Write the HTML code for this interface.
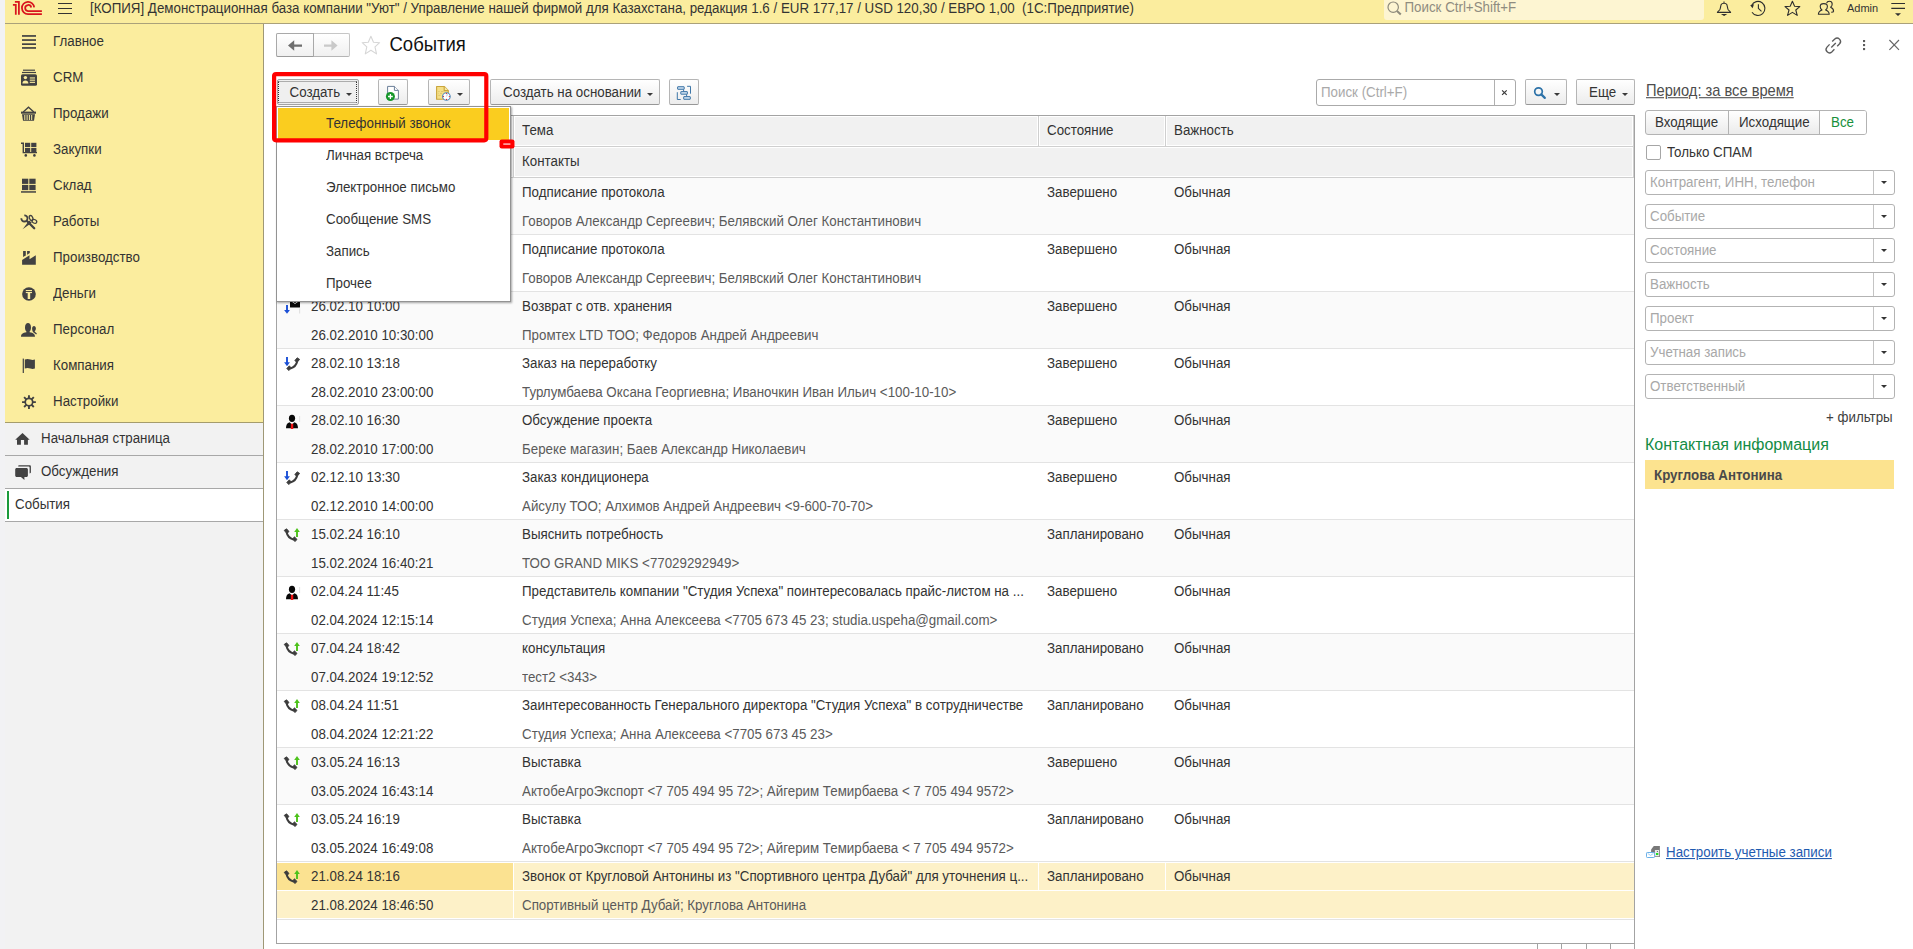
<!DOCTYPE html>
<html><head><meta charset="utf-8">
<style>
*{box-sizing:border-box;margin:0;padding:0}
html,body{width:1913px;height:949px;overflow:hidden;background:#fff;font-family:"Liberation Sans",sans-serif;font-size:13.33px;color:#333}
.a{position:absolute}
.t{position:absolute;white-space:nowrap;line-height:16px;height:16px;transform:scaleY(1.07);transform-origin:0 12.6px}
#strip{left:0;top:0;width:5px;height:949px;background:#f2f2f4}
#hdr{left:5px;top:0;width:1908px;height:24px;background:#fbed9e;border-bottom:1px solid #aaa17a}
#side{left:5px;top:24px;width:259px;height:925px;background:#f2f2f2;border-right:1px solid #9f9876}
#sec{left:0;top:0;width:258px;height:399px;background:#fbed9e;border-bottom:1px solid #a59c6c}
.oi{position:absolute;left:0;width:258px;height:33px;border-bottom:1px solid #a8a8a8}
.btn{position:absolute;height:26px;border:1px solid #b5b5b5;border-bottom-color:#979797;border-radius:2px;background:linear-gradient(#ffffff,#ececec);line-height:24px;white-space:nowrap;color:#333}
.dd{position:absolute;width:0;height:0;border-left:3px solid transparent;border-right:3px solid transparent;border-top:3px solid #3a3a3a}
#tbl{left:276px;top:115px;width:1359px;height:829px;border:1px solid #a3a3a3;background:#fff;overflow:hidden}
.row{position:absolute;left:0;width:1357px;height:57px;border-bottom:1px solid #e3e3e3}
.g{background:#f9f9f9}
.l2{color:#5a5a5a}
.inp{position:absolute;left:1645px;width:250px;height:25px;border:1px solid #b3b3b3;border-radius:3px;background:#fff}
.inp span{position:absolute;left:4px;top:4px;color:#a8a8a8;line-height:16px;white-space:nowrap;transform:scaleY(1.07);transform-origin:0 12.6px}
.inp i{position:absolute;right:20px;top:0;width:1px;height:23px;background:#c4c4c4}
.inp b{position:absolute;right:7px;top:10px;width:0;height:0;border-left:3px solid transparent;border-right:3px solid transparent;border-top:3px solid #333}
</style></head><body>
<div id="strip" class="a"></div>
<div id="hdr" class="a"></div>
<svg class="a" style="left:0;top:0" width="1913" height="24">
 <g fill="none" stroke="#d9141e" stroke-width="1.75">
  <path d="M12.9 4.9H15.8V14.8"/>
  <path d="M14.9 1.9H18.9V14.8"/>
  <path d="M34.2 7.4A6.15 6.15 0 1 0 28 14.1H41.9"/>
  <path d="M31.2 7.5A3.05 3.05 0 1 0 28 11.1H41.9"/>
 </g>
 <g stroke="#333" stroke-width="1.2">
  <path d="M58 3.5H72M58 8.5H72M58 13.5H72"/>
 </g>
 <rect x="1384" y="-3" width="320" height="23" rx="3" fill="#fdf5d2"/>
 <g fill="none" stroke="#8d8a7c" stroke-width="1.2">
  <circle cx="1393.2" cy="7.2" r="5.2"/>
  <path d="M1397 11L1400.8 14.6" stroke-width="2"/>
 </g>
 <g fill="none" stroke="#2f2f2f" stroke-width="1.1" stroke-linejoin="round">
  <path d="M1724 1.4V3.2M1721.2 4.5C1722 2.8 1726 2.8 1726.8 4.5C1727.6 6.5 1727.4 8.6 1728.4 10C1729.4 11.2 1730.6 11.6 1730.6 12.4H1717.4C1717.4 11.6 1718.6 11.2 1719.6 10C1720.6 8.6 1720.4 6.5 1721.2 4.5Z"/>
  <path d="M1751.6 5.4A7 7 0 1 1 1752 12.2"/>
  <path d="M1758.4 4.2V8.4L1761.5 11.4"/>
  <path d="M1792.4 1.2L1794.6 6.2L1799.8 6.6L1795.8 10L1797.2 15.4L1792.4 12.4L1787.6 15.4L1789 10L1785 6.6L1790.2 6.2Z"/>
  <path d="M1818.4 14.3C1818.4 11.6 1820.4 10.6 1822 10C1820.5 9 1820.2 7.6 1820.2 6.5C1820.2 4.6 1821.6 3.6 1823.8 3.6C1826 3.6 1827.4 4.6 1827.4 6.5C1827.4 7.6 1827.1 9 1825.6 10C1827.2 10.6 1829.2 11.6 1829.2 14.3Z"/>
  <path d="M1826.6 3.2C1827 1.9 1828 1.2 1829.2 1.2C1831 1.2 1832.2 2.3 1832.2 4C1832.2 5.2 1831.9 6.4 1830.6 7.3C1832 7.9 1833.6 9 1833.6 11.3C1833.6 11.9 1832.6 12.3 1831.2 12.3"/>
 </g>
 <path d="M1720.9 14.1H1727.3L1724.1 16.1Z" fill="#2f2f2f"/>
 <path d="M1750.2 5.3L1754 4.3L1752.6 8.2Z" fill="#2f2f2f"/>
 <g stroke="#2f2f2f" stroke-width="1.2"><path d="M1891.3 3.5H1905M1891.3 8.4H1905"/></g>
 <path d="M1895 13.2H1901L1898 15.9Z" fill="#2f2f2f"/>
</svg>
<div class="t" style="left:90px;top:1px;color:#333">[КОПИЯ] Демонстрационная база компании "Уют" / Управление нашей фирмой для Казахстана, редакция 1.6 / EUR 177,17 / USD 120,30 / ЕВРО 1,00&nbsp;&nbsp;(1С:Предприятие)</div>
<div class="t" style="left:1404.5px;top:0px;color:#8f8c80">Поиск Ctrl+Shift+F</div>
<div class="t" style="left:1847px;top:0px;font-size:11px;color:#333">Admin</div>
<div id="side" class="a"><div id="sec" class="a"></div>
 <div class="oi" style="top:399px"></div>
 <div class="oi" style="top:432px"></div>
 <div class="oi" style="top:465px;background:#fff"></div>
 <div class="a" style="left:2px;top:467px;width:2px;height:28px;background:#1a9a3a"></div>
</div>
<svg class="a" style="left:0;top:24px" width="264" height="500" viewBox="0 24 264 500">
 <g fill="#424242">
  <rect x="22" y="35.1" width="14" height="1.7"/><rect x="22" y="39.2" width="14" height="1.7"/><rect x="22" y="43.3" width="14" height="1.7"/><rect x="22" y="47.1" width="14" height="1.7"/>
  <!-- CRM -->
  <rect x="23" y="69.6" width="12" height="1.2"/><rect x="22" y="71.9" width="14" height="1.2"/>
  <rect x="21" y="74.2" width="16" height="11.6" rx="1.6"/>
  <!-- basket -->
  <path d="M23.2 112L28.5 107.2L33.8 112" fill="none" stroke="#424242" stroke-width="1.3"/>
  <rect x="21" y="111.6" width="15" height="2.1"/>
  <path d="M22 114.2H35L34 120.8H23Z"/>
  <!-- cart -->
  <path d="M21 143.2H23.3V152.6H37" fill="none" stroke="#424242" stroke-width="1.4"/>
  <rect x="25" y="142.8" width="5.2" height="4.3"/><rect x="31.2" y="142.8" width="5.2" height="4.3"/>
  <rect x="25" y="148" width="5.2" height="4"/><rect x="31.2" y="148" width="5.2" height="4"/>
  <circle cx="25.8" cy="155.4" r="1.3"/><circle cx="34.4" cy="155.4" r="1.3"/>
  <!-- sklad -->
  <rect x="22" y="178.7" width="6.3" height="5.2"/><rect x="29.3" y="178.7" width="6.3" height="5.2"/>
  <rect x="22" y="184.9" width="6.3" height="5.2"/><rect x="29.3" y="184.9" width="6.3" height="5.2"/>
  <rect x="21" y="191.2" width="15" height="1.5"/>
  <!-- tools -->
  <path d="M24.3 215.3A3.1 3.1 0 1 1 21.3 218.3" fill="none" stroke="#424242" stroke-width="1.8"/>
  <path d="M27.2 221.2L34.2 228.2" stroke="#424242" stroke-width="2.3" stroke-linecap="round"/>
  <ellipse cx="31.1" cy="218" rx="1.6" ry="2.6" transform="rotate(-25 31.1 218)" fill="none" stroke="#424242" stroke-width="1.3"/>
  <ellipse cx="34.4" cy="221.4" rx="2.4" ry="1.8" transform="rotate(25 34.4 221.4)" fill="none" stroke="#424242" stroke-width="1.3"/>
  <path d="M29.2 220.6L31.8 222.8L22.6 229.2Z"/>
  <!-- factory -->
  <path d="M22.1 264.7V260L29.5 255.2V259.2L35.8 255.2V264.7Z"/>
  <path d="M23.1 251H25.8V255.4L23.1 257.1Z"/>
  <path d="M27.1 251H29.8V253.1L27.1 254.8Z"/>
  <!-- money -->
  <circle cx="28.96" cy="294" r="6.85"/>
  <!-- staff -->
  <path d="M21 336.7C21 334 22.6 332.8 26.4 332.3V331.4C25.4 330.6 25 329 25 327.4C25 324.6 26.2 323 28 323C29.8 323 31 324.6 31 327.4C31 329 30.6 330.6 29.6 331.4V332.3C33.4 332.8 35 334 35 336.7Z"/>
  <path d="M32.1 328.6C32.1 327 32.9 326 34 326C35.1 326 35.9 327 35.9 328.6C35.9 329.8 35.4 330.8 34.6 331.4L36.9 333.4L36.2 334.6L33.2 332.2C32.5 331.5 32.1 330 32.1 328.6Z"/>
  <!-- flag -->
  <rect x="22.7" y="358.6" width="1.2" height="14.4"/>
  <path d="M24.8 359.6C26.8 358.6 28.6 358.8 30.4 359.6C31.9 360.2 33.3 360.2 34.9 359.6V368.6C33.3 369.2 31.9 369.2 30.4 368.6C28.6 367.8 26.8 367.6 24.8 368.6Z"/>
  <!-- gear -->
  <circle cx="28.96" cy="402.1" r="3.75" fill="none" stroke="#424242" stroke-width="1.7"/>
  <path d="M28.96 395.2V398.6M28.96 405.6V409M22.06 402.1H25.5M32.4 402.1H35.86M24.1 397.2L26.5 399.6M31.4 404.6L33.8 407M33.8 397.2L31.4 399.6M26.5 404.6L24.1 407" stroke="#424242" stroke-width="1.9"/>
  <!-- home -->
  <path d="M15.2 439.8L22.5 433L29.7 439.8H27.9V444.8H24.1V440.1H20.9V444.8H17V439.8Z"/>
  <!-- discussions -->
  <path d="M19.2 465.2H29.6C30.4 465.2 30.9 465.7 30.9 466.5V472.2C30.9 472.9 30.4 473.4 29.6 473.4V467.4C29.6 466.9 29.2 466.5 28.6 466.5H18.2C18.2 465.7 18.5 465.2 19.2 465.2Z"/>
  <path d="M16.8 468.1H26.4C27.3 468.1 27.9 468.7 27.9 469.6V475.5C27.9 476.4 27.3 477 26.4 477H24.4V479.9L20.9 477H16.8C15.8 477 15.2 476.4 15.2 475.5V469.6C15.2 468.7 15.8 468.1 16.8 468.1Z"/>
 </g>
 <g fill="#fbed9e">
  <circle cx="25.4" cy="77.6" r="1.7"/><path d="M22.4 83.6C22.4 81.4 23.6 80.4 25.4 80.4C27.2 80.4 28.4 81.4 28.4 83.6Z"/>
  <rect x="29.8" y="77.4" width="5.2" height="1.1"/><rect x="29.8" y="79.6" width="5.2" height="1.1"/><rect x="29.8" y="81.8" width="5.2" height="1.1"/>
  <rect x="24.3" y="115" width="1" height="5"/><rect x="26.6" y="115" width="1" height="5"/><rect x="28.9" y="115" width="1" height="5"/><rect x="31.2" y="115" width="1" height="5"/>
  <rect x="25.8" y="290" width="6.2" height="1.1"/><rect x="25.8" y="292" width="6.2" height="1.1"/><rect x="27.7" y="293" width="2.5" height="6"/>
 </g>
</svg>
<div class="t" style="left:53px;top:34px">Главное</div>
<div class="t" style="left:53px;top:70px">CRM</div>
<div class="t" style="left:53px;top:106px">Продажи</div>
<div class="t" style="left:53px;top:142px">Закупки</div>
<div class="t" style="left:53px;top:178px">Склад</div>
<div class="t" style="left:53px;top:214px">Работы</div>
<div class="t" style="left:53px;top:250px">Производство</div>
<div class="t" style="left:53px;top:286px">Деньги</div>
<div class="t" style="left:53px;top:322px">Персонал</div>
<div class="t" style="left:53px;top:358px">Компания</div>
<div class="t" style="left:53px;top:394px">Настройки</div>
<div class="t" style="left:41px;top:431px">Начальная страница</div>
<div class="t" style="left:41px;top:464px">Обсуждения</div>
<div class="t" style="left:15px;top:497px">События</div>
<!-- title row -->
<div class="a" style="left:276px;top:33px;width:74px;height:24px;border:1px solid #c6c6c6;border-bottom-color:#b5b5b5;border-radius:2px;background:linear-gradient(#fff,#f0f0f0)"></div>
<div class="a" style="left:276px;top:33px;width:38px;height:24px;border:1px solid #a9a9a9;border-bottom-color:#9a9a9a;border-radius:2px 0 0 2px;background:linear-gradient(#fff,#f0f0f0)"></div>
<svg class="a" style="left:264px;top:24px" width="1649" height="91" viewBox="264 24 1649 91">
 <path d="M288 45.5L294.2 40.2V44.4H302V46.8H294.2V50.8Z" fill="#6e6e6e"/>
 <path d="M337.6 45.5L331.4 40.2V44.4H324V46.8H331.4V50.8Z" fill="#c9c9c9"/>
 <path d="M370.9 36.3L373.5 42.2L379.6 42.7L375 46.8L376.5 53.9L370.9 50.3L365.3 53.9L366.8 46.8L362.2 42.7L368.3 42.2Z" fill="none" stroke="#d6d6d6" stroke-width="1.1" stroke-linejoin="round"/>
 <!-- link icon -->
 <g fill="none" stroke="#5c5c5c" stroke-width="1.35">
  <path d="M1832.2 41.6L1834.8 39A3.4 3.4 0 0 1 1839.6 43.8L1837.2 46.3"/>
  <path d="M1834.4 49.3L1831.8 51.9A3.4 3.4 0 0 1 1827 47.1L1829.6 44.4"/>
  <path d="M1831.3 47.6L1835.8 43.1"/>
 </g>
 <g fill="#5c5c5c"><rect x="1863" y="40" width="2.1" height="2.1"/><rect x="1863" y="44" width="2.1" height="2.1"/><rect x="1863" y="48" width="2.1" height="2.1"/></g>
 <path d="M1889.4 40L1899 49.8M1899 40L1889.4 49.8" stroke="#666" stroke-width="1.15"/>
</svg>
<div class="t" style="left:389.5px;top:34px;font-size:18.5px;line-height:22px;height:22px;color:#111">События</div>

<!-- toolbar -->
<div class="a" style="left:277px;top:79px;width:82px;height:26px;border:1px solid #a3a3a3;border-radius:2px;background:#efefef"></div>
<div class="a" style="left:278px;top:81px;width:79px;height:22px;border-top:1px solid #acacac;border-bottom:1px solid #acacac;border-left:1px dotted #333;border-right:1px dotted #333"></div>
<div class="t" style="left:289.5px;top:85px">Создать</div>
<div class="dd" style="left:346px;top:93px"></div>
<div class="btn" style="left:378px;top:79px;width:30px"></div>
<div class="btn" style="left:428px;top:79px;width:42px"></div>
<div class="dd" style="left:457px;top:93px"></div>
<div class="btn" style="left:490px;top:79px;width:170px"></div>
<div class="t" style="left:503px;top:85px">Создать на основании</div>
<div class="dd" style="left:647px;top:93px"></div>
<div class="btn" style="left:669px;top:79px;width:30px"></div>
<svg class="a" style="left:370px;top:79px" width="340" height="26" viewBox="370 79 340 26">
 <!-- new doc icon -->
 <path d="M387.6 86.4H394.4L398.4 90.4V99.1H387.6Z" fill="#fff" stroke="#6b7f99" stroke-width="1"/>
 <path d="M394.4 86.4V90.4H398.4" fill="#fff" stroke="#6b7f99" stroke-width="1"/>
 <circle cx="390.4" cy="96.5" r="4.5" fill="#16962a"/>
 <path d="M388 96.5H392.8M390.4 94.1V98.9" stroke="#fff" stroke-width="1.3"/>
 <!-- doc with clock -->
 <path d="M436.6 86.5H444.2L448.3 90.6V99.2H436.6Z" fill="#f5df86" stroke="#c9a53c" stroke-width="1.1" stroke-linejoin="round"/>
 <path d="M444.2 86.5V90.6H448.3" fill="#f8e9a8" stroke="#c9a53c" stroke-width="1.1"/>
 <path d="M438.2 91.5H439.6M441 91.5H443.4M438.2 93.4H438.8M440 93.4H442M438.2 95.4H440.6" stroke="#d8bf6a" stroke-width="0.8"/>
 <circle cx="446.4" cy="96.5" r="3.8" fill="#fff" stroke="#4f86b8" stroke-width="1.1"/>
 <g fill="#e01010"><circle cx="446.4" cy="93.6" r="0.55"/><circle cx="446.4" cy="99.4" r="0.55"/><circle cx="443.5" cy="96.5" r="0.55"/><circle cx="449.3" cy="96.5" r="0.55"/></g>
 <path d="M446.4 96.5L447.6 94.4" stroke="#8fb0d8" stroke-width="0.7"/>
 <!-- structure icon -->
 <g fill="#c9dcee" stroke="#3f77a8" stroke-width="1">
  <rect x="677.6" y="86.7" width="6.6" height="2.6" rx="0.3"/>
  <rect x="680.8" y="91.6" width="6.6" height="2.6" rx="0.3"/>
  <rect x="683.7" y="96.6" width="6.6" height="2.7" rx="0.3"/>
 </g>
 <path d="M683.6 89.4V91.6M686.6 94.2V96.6M687.1 86.3H690.5V93.7M677.3 92.2V99.5H680.7" fill="none" stroke="#3f77a8" stroke-width="1"/>
</svg>

<!-- search -->
<div class="a" style="left:1316px;top:79px;width:200px;height:27px;border:1px solid #aaaaaa;border-radius:3px;background:#fff"></div>
<div class="a" style="left:1494px;top:80px;width:1px;height:25px;background:#b0b0b0"></div>
<div class="t" style="left:1321px;top:85px;color:#a9a9a9">Поиск (Ctrl+F)</div>
<svg class="a" style="left:1496px;top:80px" width="20" height="24"><path d="M6.1 10.3L10.7 14.9M10.7 10.3L6.1 14.9" stroke="#3a3a3a" stroke-width="1.2"/></svg>
<div class="btn" style="left:1525px;top:79px;width:42px"></div>
<svg class="a" style="left:1525px;top:79px" width="42" height="26">
 <circle cx="13.5" cy="12.6" r="3.8" fill="none" stroke="#2d72a8" stroke-width="1.7"/>
 <path d="M16.3 15.4L19.8 18.9" stroke="#2d72a8" stroke-width="2.2" stroke-linecap="round"/>
</svg>
<div class="dd" style="left:1554px;top:93px"></div>
<div class="btn" style="left:1576px;top:79px;width:59px"></div>
<div class="t" style="left:1589px;top:85px">Еще</div>
<div class="dd" style="left:1622px;top:93px"></div>
<div id="tbl" class="a">
<div class="a" style="left:0;top:0;width:1357px;height:62px;background:#cfcfcf"></div>
<div class="a" style="left:0px;top:0;width:236px;height:30px;background:#f1f1f1;border:1px solid #fff"></div>
<div class="a" style="left:237px;top:0;width:524px;height:30px;background:#f1f1f1;border:1px solid #fff"></div>
<div class="a" style="left:762px;top:0;width:126px;height:30px;background:#f1f1f1;border:1px solid #fff"></div>
<div class="a" style="left:889px;top:0;width:467px;height:30px;background:#f1f1f1;border:1px solid #fff"></div>
<div class="a" style="left:0px;top:31px;width:236px;height:30px;background:#f1f1f1;border:1px solid #fff"></div>
<div class="a" style="left:237px;top:31px;width:1119px;height:30px;background:#f1f1f1;border:1px solid #fff"></div>
<div class="t" style="left:34px;top:7px">Дата</div>
<div class="t" style="left:34px;top:38px">Окончание</div>
<div class="t" style="left:245px;top:7px">Тема</div>
<div class="t" style="left:245px;top:38px">Контакты</div>
<div class="t" style="left:770px;top:7px">Состояние</div>
<div class="t" style="left:897px;top:7px">Важность</div>
<div class="row" style="top:62px;height:57px;background:#fafafa">
<svg class="a" style="left:0;top:0" width="30" height="30"><g transform="translate(29.8,0) scale(-1,1)"><path d="M9.6 12.2Q10.6 17.6 16.6 19.6" fill="none" stroke="#3c3c3c" stroke-width="2"/><path d="M7.2 10.4L9.6 8.8L12 11.6L9.8 13.4Z" fill="#3c3c3c" stroke="#3c3c3c" stroke-width="0.9" stroke-linejoin="round"/><path d="M15.6 19.2L17.4 16.8L20 19.4L18 21.6Z" fill="#3c3c3c" stroke="#3c3c3c" stroke-width="0.9" stroke-linejoin="round"/></g><path d="M10 8V14" stroke="#1a4fd6" stroke-width="1.9"/><path d="M7.1 13.2L10 17.2L12.9 13.2Z" fill="#1a4fd6"/></svg>
<div class="t" style="left:34px;top:7px">25.02.10 10:00</div>
<div class="t" style="left:34px;top:36px">25.02.2010 10:30:00</div>
<div class="t" style="left:245px;top:7px">Подписание протокола</div>
<div class="t l2" style="left:245px;top:36px">Говоров Александр Сергеевич; Белявский Олег Константинович</div>
<div class="t" style="left:770px;top:7px">Завершено</div>
<div class="t" style="left:897px;top:7px">Обычная</div>
</div>
<div class="row" style="top:119px;height:57px;background:#fff">
<svg class="a" style="left:0;top:0" width="30" height="30"><g transform="translate(29.8,0) scale(-1,1)"><path d="M9.6 12.2Q10.6 17.6 16.6 19.6" fill="none" stroke="#3c3c3c" stroke-width="2"/><path d="M7.2 10.4L9.6 8.8L12 11.6L9.8 13.4Z" fill="#3c3c3c" stroke="#3c3c3c" stroke-width="0.9" stroke-linejoin="round"/><path d="M15.6 19.2L17.4 16.8L20 19.4L18 21.6Z" fill="#3c3c3c" stroke="#3c3c3c" stroke-width="0.9" stroke-linejoin="round"/></g><path d="M10 8V14" stroke="#1a4fd6" stroke-width="1.9"/><path d="M7.1 13.2L10 17.2L12.9 13.2Z" fill="#1a4fd6"/></svg>
<div class="t" style="left:34px;top:7px">25.02.10 11:00</div>
<div class="t" style="left:34px;top:36px">25.02.2010 11:30:00</div>
<div class="t" style="left:245px;top:7px">Подписание протокола</div>
<div class="t l2" style="left:245px;top:36px">Говоров Александр Сергеевич; Белявский Олег Константинович</div>
<div class="t" style="left:770px;top:7px">Завершено</div>
<div class="t" style="left:897px;top:7px">Обычная</div>
</div>
<div class="row" style="top:176px;height:57px;background:#fafafa">
<svg class="a" style="left:0;top:0" width="30" height="30"><path d="M10 12.9V19" stroke="#1a4fd6" stroke-width="1.9"/><path d="M7.1 18L10 21.8L12.9 18Z" fill="#1a4fd6"/><rect x="13" y="8" width="10" height="7.6" rx="0.6" fill="#0a0a0a"/><path d="M13.6 8.4L18 11.6L22.4 8.4" stroke="#cfcfcf" stroke-width="1" fill="none"/><rect x="22.3" y="16.5" width="0.8" height="5" fill="#d8d8d8"/></svg>
<div class="t" style="left:34px;top:7px">26.02.10 10:00</div>
<div class="t" style="left:34px;top:36px">26.02.2010 10:30:00</div>
<div class="t" style="left:245px;top:7px">Возврат с отв. хранения</div>
<div class="t l2" style="left:245px;top:36px">Промтех LTD ТОО; Федоров Андрей Андреевич</div>
<div class="t" style="left:770px;top:7px">Завершено</div>
<div class="t" style="left:897px;top:7px">Обычная</div>
</div>
<div class="row" style="top:233px;height:57px;background:#fff">
<svg class="a" style="left:0;top:0" width="30" height="30"><g transform="translate(29.8,0) scale(-1,1)"><path d="M9.6 12.2Q10.6 17.6 16.6 19.6" fill="none" stroke="#3c3c3c" stroke-width="2"/><path d="M7.2 10.4L9.6 8.8L12 11.6L9.8 13.4Z" fill="#3c3c3c" stroke="#3c3c3c" stroke-width="0.9" stroke-linejoin="round"/><path d="M15.6 19.2L17.4 16.8L20 19.4L18 21.6Z" fill="#3c3c3c" stroke="#3c3c3c" stroke-width="0.9" stroke-linejoin="round"/></g><path d="M10 8V14" stroke="#1a4fd6" stroke-width="1.9"/><path d="M7.1 13.2L10 17.2L12.9 13.2Z" fill="#1a4fd6"/></svg>
<div class="t" style="left:34px;top:7px">28.02.10 13:18</div>
<div class="t" style="left:34px;top:36px">28.02.2010 23:00:00</div>
<div class="t" style="left:245px;top:7px">Заказ на переработку</div>
<div class="t l2" style="left:245px;top:36px">Турлумбаева Оксана Георгиевна; Иваночкин Иван Ильич &lt;100-10-10&gt;</div>
<div class="t" style="left:770px;top:7px">Завершено</div>
<div class="t" style="left:897px;top:7px">Обычная</div>
</div>
<div class="row" style="top:290px;height:57px;background:#fafafa">
<svg class="a" style="left:0;top:0" width="30" height="30"><ellipse cx="15" cy="12.3" rx="3.1" ry="3.6" fill="#080808"/><path d="M9 22.2C9 18.6 10.4 16.8 12.6 16.2L15 18.6L17.4 16.2C19.6 16.8 21 18.6 21 22.2Z" fill="#080808"/><path d="M13.9 17.8H16.2L16.3 23H13.8Z" fill="#f01010"/><rect x="22.3" y="10" width="0.8" height="6" fill="#dcdcdc"/></svg>
<div class="t" style="left:34px;top:7px">28.02.10 16:30</div>
<div class="t" style="left:34px;top:36px">28.02.2010 17:00:00</div>
<div class="t" style="left:245px;top:7px">Обсуждение проекта</div>
<div class="t l2" style="left:245px;top:36px">Береке магазин; Баев Александр Николаевич</div>
<div class="t" style="left:770px;top:7px">Завершено</div>
<div class="t" style="left:897px;top:7px">Обычная</div>
</div>
<div class="row" style="top:347px;height:57px;background:#fff">
<svg class="a" style="left:0;top:0" width="30" height="30"><g transform="translate(29.8,0) scale(-1,1)"><path d="M9.6 12.2Q10.6 17.6 16.6 19.6" fill="none" stroke="#3c3c3c" stroke-width="2"/><path d="M7.2 10.4L9.6 8.8L12 11.6L9.8 13.4Z" fill="#3c3c3c" stroke="#3c3c3c" stroke-width="0.9" stroke-linejoin="round"/><path d="M15.6 19.2L17.4 16.8L20 19.4L18 21.6Z" fill="#3c3c3c" stroke="#3c3c3c" stroke-width="0.9" stroke-linejoin="round"/></g><path d="M10 8V14" stroke="#1a4fd6" stroke-width="1.9"/><path d="M7.1 13.2L10 17.2L12.9 13.2Z" fill="#1a4fd6"/></svg>
<div class="t" style="left:34px;top:7px">02.12.10 13:30</div>
<div class="t" style="left:34px;top:36px">02.12.2010 14:00:00</div>
<div class="t" style="left:245px;top:7px">Заказ кондиционера</div>
<div class="t l2" style="left:245px;top:36px">Айсулу ТОО; Алхимов Андрей Андреевич &lt;9-600-70-70&gt;</div>
<div class="t" style="left:770px;top:7px">Завершено</div>
<div class="t" style="left:897px;top:7px">Обычная</div>
</div>
<div class="row" style="top:404px;height:57px;background:#fafafa">
<svg class="a" style="left:0;top:0" width="30" height="30"><path d="M9.6 12.2Q10.6 17.6 16.6 19.6" fill="none" stroke="#3c3c3c" stroke-width="2"/><path d="M7.2 10.4L9.6 8.8L12 11.6L9.8 13.4Z" fill="#3c3c3c" stroke="#3c3c3c" stroke-width="0.9" stroke-linejoin="round"/><path d="M15.6 19.2L17.4 16.8L20 19.4L18 21.6Z" fill="#3c3c3c" stroke="#3c3c3c" stroke-width="0.9" stroke-linejoin="round"/><path d="M20 17V10.6" stroke="#4cc21a" stroke-width="1.9"/><path d="M17.2 11.9L20 8.1L22.8 11.9Z" fill="#4cc21a"/></svg>
<div class="t" style="left:34px;top:7px">15.02.24 16:10</div>
<div class="t" style="left:34px;top:36px">15.02.2024 16:40:21</div>
<div class="t" style="left:245px;top:7px">Выяснить потребность</div>
<div class="t l2" style="left:245px;top:36px">ТОО GRAND MIKS &lt;77029292949&gt;</div>
<div class="t" style="left:770px;top:7px">Запланировано</div>
<div class="t" style="left:897px;top:7px">Обычная</div>
</div>
<div class="row" style="top:461px;height:57px;background:#fff">
<svg class="a" style="left:0;top:0" width="30" height="30"><ellipse cx="15" cy="12.3" rx="3.1" ry="3.6" fill="#080808"/><path d="M9 22.2C9 18.6 10.4 16.8 12.6 16.2L15 18.6L17.4 16.2C19.6 16.8 21 18.6 21 22.2Z" fill="#080808"/><path d="M13.9 17.8H16.2L16.3 23H13.8Z" fill="#f01010"/><rect x="22.3" y="10" width="0.8" height="6" fill="#dcdcdc"/></svg>
<div class="t" style="left:34px;top:7px">02.04.24 11:45</div>
<div class="t" style="left:34px;top:36px">02.04.2024 12:15:14</div>
<div class="t" style="left:245px;top:7px">Представитель компании "Студия Успеха" поинтересовалась прайс-листом на ...</div>
<div class="t l2" style="left:245px;top:36px">Студия Успеха; Анна Алексеева &lt;7705 673 45 23; studia.uspeha@gmail.com&gt;</div>
<div class="t" style="left:770px;top:7px">Завершено</div>
<div class="t" style="left:897px;top:7px">Обычная</div>
</div>
<div class="row" style="top:518px;height:57px;background:#fafafa">
<svg class="a" style="left:0;top:0" width="30" height="30"><path d="M9.6 12.2Q10.6 17.6 16.6 19.6" fill="none" stroke="#3c3c3c" stroke-width="2"/><path d="M7.2 10.4L9.6 8.8L12 11.6L9.8 13.4Z" fill="#3c3c3c" stroke="#3c3c3c" stroke-width="0.9" stroke-linejoin="round"/><path d="M15.6 19.2L17.4 16.8L20 19.4L18 21.6Z" fill="#3c3c3c" stroke="#3c3c3c" stroke-width="0.9" stroke-linejoin="round"/><path d="M20 17V10.6" stroke="#4cc21a" stroke-width="1.9"/><path d="M17.2 11.9L20 8.1L22.8 11.9Z" fill="#4cc21a"/></svg>
<div class="t" style="left:34px;top:7px">07.04.24 18:42</div>
<div class="t" style="left:34px;top:36px">07.04.2024 19:12:52</div>
<div class="t" style="left:245px;top:7px">консультация</div>
<div class="t l2" style="left:245px;top:36px">тест2 &lt;343&gt;</div>
<div class="t" style="left:770px;top:7px">Запланировано</div>
<div class="t" style="left:897px;top:7px">Обычная</div>
</div>
<div class="row" style="top:575px;height:57px;background:#fff">
<svg class="a" style="left:0;top:0" width="30" height="30"><path d="M9.6 12.2Q10.6 17.6 16.6 19.6" fill="none" stroke="#3c3c3c" stroke-width="2"/><path d="M7.2 10.4L9.6 8.8L12 11.6L9.8 13.4Z" fill="#3c3c3c" stroke="#3c3c3c" stroke-width="0.9" stroke-linejoin="round"/><path d="M15.6 19.2L17.4 16.8L20 19.4L18 21.6Z" fill="#3c3c3c" stroke="#3c3c3c" stroke-width="0.9" stroke-linejoin="round"/><path d="M20 17V10.6" stroke="#4cc21a" stroke-width="1.9"/><path d="M17.2 11.9L20 8.1L22.8 11.9Z" fill="#4cc21a"/></svg>
<div class="t" style="left:34px;top:7px">08.04.24 11:51</div>
<div class="t" style="left:34px;top:36px">08.04.2024 12:21:22</div>
<div class="t" style="left:245px;top:7px">Заинтересованность Генерального директора "Студия Успеха" в сотрудничестве</div>
<div class="t l2" style="left:245px;top:36px">Студия Успеха; Анна Алексеева &lt;7705 673 45 23&gt;</div>
<div class="t" style="left:770px;top:7px">Запланировано</div>
<div class="t" style="left:897px;top:7px">Обычная</div>
</div>
<div class="row" style="top:632px;height:57px;background:#fafafa">
<svg class="a" style="left:0;top:0" width="30" height="30"><path d="M9.6 12.2Q10.6 17.6 16.6 19.6" fill="none" stroke="#3c3c3c" stroke-width="2"/><path d="M7.2 10.4L9.6 8.8L12 11.6L9.8 13.4Z" fill="#3c3c3c" stroke="#3c3c3c" stroke-width="0.9" stroke-linejoin="round"/><path d="M15.6 19.2L17.4 16.8L20 19.4L18 21.6Z" fill="#3c3c3c" stroke="#3c3c3c" stroke-width="0.9" stroke-linejoin="round"/><path d="M20 17V10.6" stroke="#4cc21a" stroke-width="1.9"/><path d="M17.2 11.9L20 8.1L22.8 11.9Z" fill="#4cc21a"/></svg>
<div class="t" style="left:34px;top:7px">03.05.24 16:13</div>
<div class="t" style="left:34px;top:36px">03.05.2024 16:43:14</div>
<div class="t" style="left:245px;top:7px">Выставка</div>
<div class="t l2" style="left:245px;top:36px">АктобеАгроЭкспорт &lt;7 705 494 95 72&gt;; Айгерим Темирбаева &lt; 7 705 494 9572&gt;</div>
<div class="t" style="left:770px;top:7px">Завершено</div>
<div class="t" style="left:897px;top:7px">Обычная</div>
</div>
<div class="row" style="top:689px;height:57px;background:#fff">
<svg class="a" style="left:0;top:0" width="30" height="30"><path d="M9.6 12.2Q10.6 17.6 16.6 19.6" fill="none" stroke="#3c3c3c" stroke-width="2"/><path d="M7.2 10.4L9.6 8.8L12 11.6L9.8 13.4Z" fill="#3c3c3c" stroke="#3c3c3c" stroke-width="0.9" stroke-linejoin="round"/><path d="M15.6 19.2L17.4 16.8L20 19.4L18 21.6Z" fill="#3c3c3c" stroke="#3c3c3c" stroke-width="0.9" stroke-linejoin="round"/><path d="M20 17V10.6" stroke="#4cc21a" stroke-width="1.9"/><path d="M17.2 11.9L20 8.1L22.8 11.9Z" fill="#4cc21a"/></svg>
<div class="t" style="left:34px;top:7px">03.05.24 16:19</div>
<div class="t" style="left:34px;top:36px">03.05.2024 16:49:08</div>
<div class="t" style="left:245px;top:7px">Выставка</div>
<div class="t l2" style="left:245px;top:36px">АктобеАгроЭкспорт &lt;7 705 494 95 72&gt;; Айгерим Темирбаева &lt; 7 705 494 9572&gt;</div>
<div class="t" style="left:770px;top:7px">Запланировано</div>
<div class="t" style="left:897px;top:7px">Обычная</div>
</div>
<div class="row" style="top:746px;height:58px;background:#fdf1c8">
<div class="a" style="left:0;top:0;width:236px;height:28px;background:#fbe291"></div>
<div class="a" style="left:0;top:0;width:1357px;height:1px;background:#fff"></div>
<div class="a" style="left:0;top:28px;width:1357px;height:1px;background:#fff"></div>
<div class="a" style="left:0;top:56px;width:1357px;height:1px;background:#fff"></div>
<div class="a" style="left:236px;top:0;width:1px;height:57px;background:#fff"></div>
<div class="a" style="left:761px;top:0;width:1px;height:28px;background:#fff"></div>
<div class="a" style="left:888px;top:0;width:1px;height:28px;background:#fff"></div>
<svg class="a" style="left:0;top:0" width="30" height="30"><path d="M9.6 12.2Q10.6 17.6 16.6 19.6" fill="none" stroke="#3c3c3c" stroke-width="2"/><path d="M7.2 10.4L9.6 8.8L12 11.6L9.8 13.4Z" fill="#3c3c3c" stroke="#3c3c3c" stroke-width="0.9" stroke-linejoin="round"/><path d="M15.6 19.2L17.4 16.8L20 19.4L18 21.6Z" fill="#3c3c3c" stroke="#3c3c3c" stroke-width="0.9" stroke-linejoin="round"/><path d="M20 17V10.6" stroke="#4cc21a" stroke-width="1.9"/><path d="M17.2 11.9L20 8.1L22.8 11.9Z" fill="#4cc21a"/></svg>
<div class="t" style="left:34px;top:7px">21.08.24 18:16</div>
<div class="t" style="left:34px;top:36px">21.08.2024 18:46:50</div>
<div class="t" style="left:245px;top:7px">Звонок от Кругловой Антонины из "Спортивного центра Дубай" для уточнения ц...</div>
<div class="t l2" style="left:245px;top:36px">Спортивный центр Дубай; Круглова Антонина</div>
<div class="t" style="left:770px;top:7px">Запланировано</div>
<div class="t" style="left:897px;top:7px">Обычная</div>
</div>
</div>
<div class="a" style="left:1537px;top:943px;width:1px;height:6px;background:#a3a3a3"></div>
<div class="a" style="left:1561px;top:943px;width:1px;height:6px;background:#a3a3a3"></div>
<div class="a" style="left:1586px;top:943px;width:1px;height:6px;background:#a3a3a3"></div>
<div class="a" style="left:1610px;top:943px;width:1px;height:6px;background:#a3a3a3"></div>
<div class="a" style="left:1634px;top:943px;width:1px;height:6px;background:#a3a3a3"></div><!-- popup -->
<div class="a" style="left:276px;top:106px;width:235px;height:196px;background:#fff;border:1px solid #939393;box-shadow:1px 1px 2px rgba(0,0,0,.35)"></div>
<div class="a" style="left:278px;top:108px;width:231px;height:32px;background:#facd1f"></div>
<div class="t" style="left:326px;top:116px">Телефонный звонок</div>
<div class="t" style="left:326px;top:148px">Личная встреча</div>
<div class="t" style="left:326px;top:180px">Электронное письмо</div>
<div class="t" style="left:326px;top:212px">Сообщение SMS</div>
<div class="t" style="left:326px;top:244px">Запись</div>
<div class="t" style="left:326px;top:276px">Прочее</div>
<!-- annotation -->
<svg class="a" style="left:260px;top:60px" width="270" height="100" viewBox="260 60 270 100">
 <rect x="274.1" y="74.1" width="212.2" height="66.2" rx="2" fill="none" stroke="#ff0000" stroke-width="4.2"/>
 <rect x="499.5" y="139.4" width="15" height="9.1" rx="2.2" fill="#ff0000"/>
 <rect x="503.3" y="143.2" width="7.1" height="1.8" fill="#ff9a9a"/>
</svg>
<!-- right panel -->
<div class="t" style="left:1646px;top:82px;font-size:14.67px;line-height:18px;height:18px;color:#4d4d4d;text-decoration:underline">Период: за все время</div>
<div class="a" style="left:1645px;top:110px;width:222px;height:25px;border:1px solid #b3b3b3;border-radius:3px;background:linear-gradient(#fff,#ebebeb);overflow:hidden">
 <div class="a" style="left:82px;top:0;width:1px;height:23px;background:#b3b3b3"></div>
 <div class="a" style="left:173px;top:0;width:48px;height:23px;background:#fff;border-left:1px solid #b3b3b3"></div>
</div>
<div class="t" style="left:1655px;top:115px">Входящие</div>
<div class="t" style="left:1739px;top:115px">Исходящие</div>
<div class="t" style="left:1831px;top:115px;color:#17903c">Все</div>
<div class="a" style="left:1646px;top:145px;width:15px;height:15px;border:1px solid #a6a6a6;border-radius:2px;background:#fff"></div>
<div class="t" style="left:1667px;top:145px">Только СПАМ</div>
<div class="inp" style="top:170px"><span>Контрагент, ИНН, телефон</span><i></i><b></b></div>
<div class="inp" style="top:204px"><span>Событие</span><i></i><b></b></div>
<div class="inp" style="top:238px"><span>Состояние</span><i></i><b></b></div>
<div class="inp" style="top:272px"><span>Важность</span><i></i><b></b></div>
<div class="inp" style="top:306px"><span>Проект</span><i></i><b></b></div>
<div class="inp" style="top:340px"><span>Учетная запись</span><i></i><b></b></div>
<div class="inp" style="top:374px"><span>Ответственный</span><i></i><b></b></div>
<div class="t" style="left:1826px;top:410px;color:#404040">+ фильтры</div>
<div class="t" style="left:1645px;top:436px;font-size:16px;line-height:18px;height:18px;color:#138c45">Контактная информация</div>
<div class="a" style="left:1645px;top:460px;width:249px;height:29px;background:#fce38f"></div>
<div class="t" style="left:1654px;top:468px;font-weight:bold;color:#4a4a4a">Круглова Антонина</div>
<svg class="a" style="left:1645px;top:845px" width="18" height="14">
 <path d="M8.8 1.1H14.9V11.9H6.1V4.6Z" fill="#787878"/>
 <rect x="9.9" y="5" width="4.2" height="6.3" fill="#e8e8e8"/>
 <circle cx="12.4" cy="6.5" r="0.6" fill="#555"/>
 <rect x="11" y="8" width="2.3" height="2" fill="#22dd22"/>
 <rect x="1.5" y="7.5" width="8.1" height="5" rx="0.8" fill="#fff" stroke="#6ab0e8" stroke-width="1"/>
 <path d="M2.6 8.4L5.55 10.4L8.5 8.4" fill="none" stroke="#8cc4f0" stroke-width="0.8"/>
</svg>
<div class="t" style="left:1666px;top:845px;color:#1f5bb0;text-decoration:underline">Настроить учетные записи</div>

</body></html>
